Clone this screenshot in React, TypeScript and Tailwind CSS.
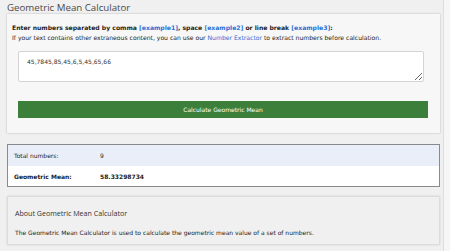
export default function App() {
  const body = { fontFamily: '"DejaVu Sans", Verdana, sans-serif' };
  const head = { fontFamily: '"Open Sans", "Segoe UI", sans-serif' };
  return (
    <div className="w-[450px] h-[251px] bg-[#f6f6f6] flex overflow-hidden">
      <div className="w-[444px] h-full bg-[#f0f0f0] border-r border-[#dedede] pl-[7px] pr-[3px] flex flex-col">
        <div className="h-[14px] text-[9.7px] leading-[14px] text-[#4a4a4a] pt-[1px]" style={head}>
          Geometric Mean Calculator
        </div>
        <div className="h-[119px] bg-[#f7f7f7] shadow-[0_0_2px_rgba(0,0,0,0.25)] flex flex-col" style={body}>
          <div className="pl-[5px] pt-[9px] text-[6.1px] leading-[10px] text-[#222]">
            <div className="font-bold">
              Enter numbers separated by comma <span className="text-[#2a6fd6]">[example1]</span>, space{' '}
              <span className="text-[#2a6fd6]">[example2]</span> or line break{' '}
              <span className="text-[#2a6fd6]">[example3]</span>:
            </div>
            <div>
              If your text contains other extraneous content, you can use our{' '}
              <span className="text-[#2a6fd6]">Number Extractor</span> to extract numbers before calculation.
            </div>
          </div>
          <textarea
            className="mt-[8px] ml-[11px] w-[406px] h-[31px] bg-white border border-[#d4d4d4] rounded-[2px] text-[6px] leading-[10px] text-[#333] px-[8px] py-[5px] resize-y outline-none"
            style={body}
            defaultValue="45,7845,85,45,6,5,45,65,66"
          />
          <div className="mt-[19px] ml-[11px] w-[410px] h-[17px] bg-[#3b7f3b] text-white text-[6px] flex items-center justify-center">
            Calculate Geometric Mean
          </div>
        </div>
        <div className="mt-[11px] h-[43px] border border-[#8a8a8a] bg-white flex flex-col text-[6px] text-[#222] w-[433px]" style={body}>
          <div className="h-[21px] bg-[#e9eef9] flex items-center pl-[6px]">
            <div className="w-[86px]">Total numbers:</div>
            <div>9</div>
          </div>
          <div className="flex-1 flex items-center pl-[6px] font-bold">
            <div className="w-[86px]">Geometric Mean:</div>
            <div>58.33298734</div>
          </div>
        </div>
        <div className="mt-[9px] h-[49px] w-[433px] bg-[#f0f0f0] border border-[#dcdcdc] shadow-[0_0_2px_rgba(0,0,0,0.12)] pl-[7px] flex flex-col">
          <div className="mt-[10px] text-[7.1px] leading-[12px] text-[#333]" style={head}>
            About Geometric Mean Calculator
          </div>
          <div className="mt-[9px] text-[6px] leading-[9px] text-[#222]" style={body}>
            The Geometric Mean Calculator is used to calculate the geometric mean value of a set of numbers.
          </div>
        </div>
      </div>
    </div>
  );
}
